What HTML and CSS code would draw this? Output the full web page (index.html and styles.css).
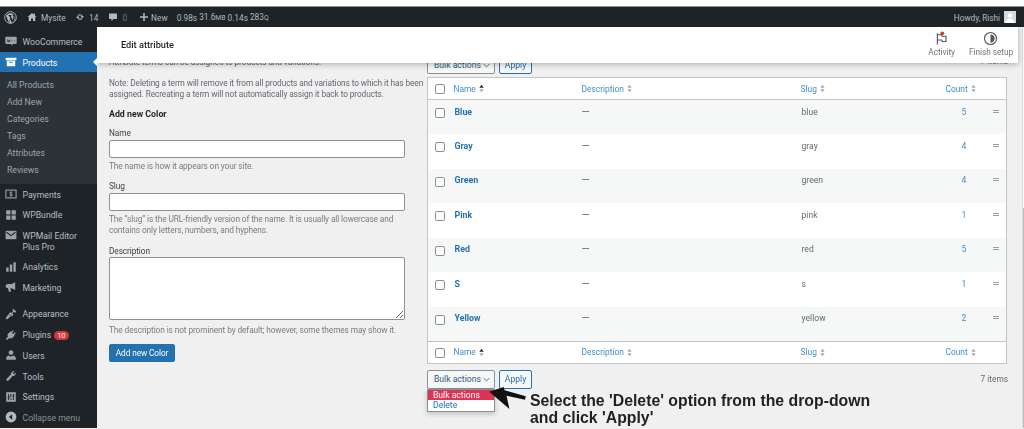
FILE: index.html
```html
<!DOCTYPE html>
<html lang="en">
<head>
<meta charset="utf-8">
<title>Edit attribute</title>
<link rel="stylesheet" href="styles.css">
</head>
<body>
<svg class="defs" width="0" height="0" aria-hidden="true">
  <symbol id="sort" viewBox="0 0 6 10"><path d="M3 0.5 5.6 4.2H.4zM3 9.5 .4 5.8h5.2z"/></symbol>
  <symbol id="sort-up" viewBox="0 0 6 10"><path d="M3 0.5 5.6 4.2H.4z" fill="#1d2327"/><path d="M3 9.5 .4 5.8h5.2z"/></symbol>
</svg>
<div class="strip"></div>
<header class="adminbar">
  <svg class="ab-wp" viewBox="0 0 20 20"><circle cx="10" cy="10" r="9" fill="none" stroke="currentColor" stroke-width="1.4"/><path d="M3.2 7.2 7.4 18l2.2-6.4-1.6-4.4H6.8V6.300h5v.9h-1.300l2.500 7.200 1.500-4.800c.4-1.400-.1-2.400-1-3.200-.3-.3 0-.9.5-.9h1.300C13 2.600 6.500 2 3.200 7.200zM10 12.800l-2 5.900c1.300.4 2.800.4 4.200-.1zM16.500 7c.6 2.900-.1 6.400-2.800 10 3.300-2 4.900-5.800 2.800-10z" fill="currentColor"/></svg>
  <svg class="ab-ico home" viewBox="0 0 20 20"><path d="M10 2 1 10h2.500v8H8v-5h4v5h4.500v-8H19l-3-2.700V3h-2.500v2.100z" fill="currentColor"/></svg>
  <span class="ab-item site">Mysite</span>
  <svg class="ab-ico upd" viewBox="0 0 20 20"><path d="M10 4.500c2.600 0 4.800 1.800 5.400 4.200H18l-3.500 4-3.500-4h2.300c-.5-1.200-1.900-2.100-3.300-2.100-1.200 0-2.300.6-3 1.500L5.200 6.500C6.400 5.300 8.100 4.500 10 4.500zM5.500 7.300l3.500 4H6.700c.5 1.200 1.900 2.100 3.300 2.100 1.200 0 2.300-.6 3-1.500l1.800 1.600c-1.200 1.200-2.900 2-4.800 2-2.600 0-4.800-1.800-5.400-4.200H2z" fill="currentColor"/></svg>
  <span class="ab-item num">14</span>
  <svg class="ab-ico cmt" viewBox="0 0 20 20"><path d="M3 3h14c.6 0 1 .4 1 1v9c0 .6-.4 1-1 1h-6l-4 4v-4H3c-.6 0-1-.4-1-1V4c0-.6.4-1 1-1z" fill="currentColor"/></svg>
  <span class="ab-item zero">0</span>
  <svg class="ab-ico plus" viewBox="0 0 20 20"><path d="M8.500 2h3v6.500H18v3h-6.500V18h-3v-6.500H2v-3h6.500z" fill="currentColor"/></svg>
  <span class="ab-item new">New</span>
  <span class="ab-item stats">0.98s</span>
  <span class="ab-item stats">31.6<small>MB</small></span>
  <span class="ab-item stats">0.14s</span>
  <span class="ab-item stats">283<small>Q</small></span>
  <span class="ab-item ab-howdy">Howdy, Rishi</span>
  <svg class="ab-avatar" viewBox="0 0 12 12"><rect width="12" height="12" fill="#d8d8d8"/><circle cx="6" cy="4.500" r="2.300" fill="#fff"/><path d="M1.500 12c0-3 2-4.500 4.500-4.500s4.500 1.500 4.500 4.500z" fill="#fff"/></svg>
</header>
<div class="layout">
  <nav class="sidebar">
    <ul class="menu">
      <li class="item"><svg class="ico" viewBox="0 0 20 20"><path d="M2 3h16c.8 0 1.500.7 1.500 1.500v9c0 .8-.7 1.500-1.500 1.500h-6l1 3-4-3H2c-.8 0-1.500-.7-1.500-1.500v-9C.5 3.700 1.200 3 2 3z" fill="currentColor"/><path d="M4 7.500l1 4 1.300-2.500 1 2.500 1.200-4M11 9.500h1M15 9.500h1" stroke="#1d2327" stroke-width="1.200" fill="none"/></svg><span>WooCommerce</span></li>
      <li class="item current"><svg class="ico" viewBox="0 0 20 20"><path d="M1 3h18v4H1zM3 8h14v9H3z" fill="currentColor"/><path d="M7 10.500h6" stroke="#2271b1" stroke-width="1.500"/></svg><span>Products</span></li>
      <li class="subwrap">
        <ul class="submenu">
          <li>All Products</li>
          <li>Add New</li>
          <li>Categories</li>
          <li>Tags</li>
          <li>Attributes</li>
          <li>Reviews</li>
        </ul>
      </li>
      <li class="item"><svg class="ico" viewBox="0 0 20 20"><rect x="1.500" y="3.500" width="17" height="13" fill="none" stroke="currentColor" stroke-width="1.800"/><path d="M12.500 7H8.500v3h3v3H7.500M10 5.500v9" fill="none" stroke="currentColor" stroke-width="1.300"/></svg><span>Payments</span></li>
      <li class="item"><svg class="ico" viewBox="0 0 20 20"><path d="M2 2h7v7H2zM11 2h7v7h-7zM2 11h7v7H2zM11 11h7v7h-7z" fill="currentColor"/></svg><span>WPBundle</span></li>
      <li class="item two"><svg class="ico" viewBox="0 0 20 20"><path d="M1 3h18v14H1z" fill="currentColor"/><path d="M2.500 5.500 10 11l7.500-5.500" fill="none" stroke="#1d2327" stroke-width="1.800"/></svg><span>WPMail Editor Plus Pro</span></li>
      <li class="item"><svg class="ico" viewBox="0 0 20 20"><path d="M2 11h4v7H2zM8 6h4v12H8zM14 2h4v16h-4z" fill="currentColor"/></svg><span>Analytics</span></li>
      <li class="item group-end"><svg class="ico" viewBox="0 0 20 20"><path d="M17 2v13l-6-3H9l1 6H6.500L5 12c-2.500 0-4-1.300-4-3.500S2.500 5 5 5h6z" fill="currentColor"/></svg><span>Marketing</span></li>
      <li class="item"><svg class="ico" viewBox="0 0 20 20"><path d="M13 1l6 5-2 2-2.500-1.500L12 9l2 2-2 3-6-5 3-2 1.500 1.500L13 6zM6 10l4 3.500L3.500 19 1 17z" fill="currentColor"/></svg><span>Appearance</span></li>
      <li class="item"><svg class="ico" viewBox="0 0 20 20"><path d="M13 2l1.500 1.500-3 3 2 2 3-3L18 7l-3 3 1 1-3.500 3.500c-1.500 1.500-3.500 1.500-5 .5L4 18H2v-2l3-3.500c-1-1.500-1-3.500.5-5L9 4l1 1z" fill="currentColor"/></svg><span>Plugins</span><b class="badge">10</b></li>
      <li class="item"><svg class="ico" viewBox="0 0 20 20"><circle cx="10" cy="6" r="4" fill="currentColor"/><path d="M2 18v-3c0-2 3-3.500 4.500-4 1 1 2.200 1.500 3.500 1.500s2.500-.5 3.500-1.500c1.500.5 4.500 2 4.500 4v3z" fill="currentColor"/></svg><span>Users</span></li>
      <li class="item"><svg class="ico" viewBox="0 0 20 20"><path d="M18 5.500c0 2.800-2.500 5-5.200 4.500L6 17.500c-.8.900-2.300.9-3.100 0-.9-.8-.9-2.300 0-3.100L10 7.200C9.500 4.500 11.700 2 14.500 2c.6 0 1 .1 1.500.3L13 5l2 2 2.700-3c.2.500.3 1 .3 1.500z" fill="currentColor"/></svg><span>Tools</span></li>
      <li class="item"><svg class="ico" viewBox="0 0 20 20"><path d="M2 2h16v16H2z" fill="currentColor"/><path d="M6 5v10M4.500 11h3M10 5v4H7.500M14 5v10M12.500 8h3M10 12v3" stroke="#1d2327" stroke-width="1.500" fill="none"/></svg><span>Settings</span></li>
      <li class="item collapse"><svg class="ico" viewBox="0 0 20 20"><circle cx="10" cy="10" r="9" fill="currentColor"/><path d="M12 5.500v9L6.500 10z" fill="#1d2327"/></svg><span>Collapse menu</span></li>
    </ul>
  </nav>
  <main class="content">
    <div class="wc-header">
      <h1 class="wc-title">Edit attribute</h1>
      <div class="wc-actions">
        <div class="wc-action">
          <svg class="wc-ico" viewBox="0 0 20 20"><path d="M4.500 3v15" stroke="#50575e" stroke-width="1.500"/><path d="M4.500 5h5.500l.7 2H16v7h-5l-.7-2H4.500" fill="none" stroke="#50575e" stroke-width="1.500"/><circle cx="11" cy="3" r="2.500" fill="#d63638"/></svg>
          <span>Activity</span>
        </div>
        <div class="wc-action">
          <svg class="wc-ico" viewBox="0 0 20 20"><circle cx="10" cy="10" r="8" fill="none" stroke="#50575e" stroke-width="1.500"/><path d="M10 4.500a5.500 5.500 0 0 1 0 11z" fill="#50575e"/></svg>
          <span>Finish setup</span>
        </div>
      </div>
    </div>
    <div class="columns">
      <section class="col-form">
        <p class="intro">Attribute terms can be assigned to products and variations.</p>
        <p class="note">Note: Deleting a term will remove it from all products and variations to which it has been assigned. Recreating a term will not automatically assign it back to products.</p>
        <h2 class="form-title">Add new Color</h2>
        <label class="lbl">Name</label>
        <input class="field" type="text">
        <p class="hint">The name is how it appears on your site.</p>
        <label class="lbl lbl-next">Slug</label>
        <input class="field" type="text">
        <p class="hint">The “slug” is the URL-friendly version of the name. It is usually all lowercase and contains only letters, numbers, and hyphens.</p>
        <label class="lbl lbl-desc">Description</label>
        <textarea class="area"></textarea>
        <p class="hint hint-area">The description is not prominent by default; however, some themes may show it.</p>
        <button class="primary" type="button">Add new Color</button>
      </section>
      <section class="col-table">
        <div class="nav nav-top">
          <div class="select">Bulk actions<svg class="chev" viewBox="0 0 10 6"><path d="M1 1l4 4 4-4" fill="none" stroke="#50575e" stroke-width="1.200"/></svg></div>
          <button class="apply" type="button">Apply</button>
          <span class="count">7 items</span>
        </div>
        <table class="terms">
          <colgroup><col class="c-check"><col class="c-name"><col class="c-desc"><col class="c-slug"><col class="c-count"><col class="c-handle"></colgroup>
          <thead>
            <tr>
              <th><span class="box"></span></th>
              <th>Name <svg class="sort"><use href="#sort-up"/></svg></th>
              <th>Description <svg class="sort"><use href="#sort"/></svg></th>
              <th>Slug <svg class="sort"><use href="#sort"/></svg></th>
              <th>Count <svg class="sort"><use href="#sort"/></svg></th>
              <th></th>
            </tr>
          </thead>
          <tbody>
            <tr class="alt"><td><span class="box"></span></td><td class="term">Blue</td><td class="dash">—</td><td class="slug">blue</td><td class="n">5</td><td><span class="grip"></span></td></tr>
            <tr><td><span class="box"></span></td><td class="term">Gray</td><td class="dash">—</td><td class="slug">gray</td><td class="n">4</td><td><span class="grip"></span></td></tr>
            <tr class="alt"><td><span class="box"></span></td><td class="term">Green</td><td class="dash">—</td><td class="slug">green</td><td class="n">4</td><td><span class="grip"></span></td></tr>
            <tr><td><span class="box"></span></td><td class="term">Pink</td><td class="dash">—</td><td class="slug">pink</td><td class="n">1</td><td><span class="grip"></span></td></tr>
            <tr class="alt"><td><span class="box"></span></td><td class="term">Red</td><td class="dash">—</td><td class="slug">red</td><td class="n">5</td><td><span class="grip"></span></td></tr>
            <tr><td><span class="box"></span></td><td class="term">S</td><td class="dash">—</td><td class="slug">s</td><td class="n">1</td><td><span class="grip"></span></td></tr>
            <tr class="alt"><td><span class="box"></span></td><td class="term">Yellow</td><td class="dash">—</td><td class="slug">yellow</td><td class="n">2</td><td><span class="grip"></span></td></tr>
          </tbody>
          <tfoot>
            <tr>
              <th><span class="box"></span></th>
              <th>Name <svg class="sort"><use href="#sort-up"/></svg></th>
              <th>Description <svg class="sort"><use href="#sort"/></svg></th>
              <th>Slug <svg class="sort"><use href="#sort"/></svg></th>
              <th>Count <svg class="sort"><use href="#sort"/></svg></th>
              <th></th>
            </tr>
          </tfoot>
        </table>
        <div class="nav nav-bottom">
          <div class="select">Bulk actions<svg class="chev" viewBox="0 0 10 6"><path d="M1 1l4 4 4-4" fill="none" stroke="#50575e" stroke-width="1.200"/></svg></div>
          <button class="apply" type="button">Apply</button>
          <span class="count">7 items</span>
          <ul class="dropdown">
            <li class="selected">Bulk actions</li>
            <li>Delete</li>
          </ul>
          <svg class="arrow" viewBox="0 0 40 26"><path d="M1 5 16 0l1 3.500 22 6-.8 3.700L19 9l3 14z" fill="#111"/></svg>
          <p class="callout">Select the 'Delete' option from the drop-down<br>and click 'Apply'</p>
        </div>
      </section>
    </div>
    <div class="scrollbar"></div>
  </main>
</div>
</body>
</html>
```

FILE: styles.css
```css
* { box-sizing: border-box; }
html, body { margin: 0; height: 429px; overflow: hidden; }
body {
  background: #f0f0f0;
  font-family: Roboto, "Noto Sans", sans-serif;
  font-size: 8.300px;
  line-height: 11px;
  color: #646970;
  filter: blur(0.3px);
}
.defs { position: absolute; }
ul { list-style: none; margin: 0; padding: 0; }
p, h1, h2 { margin: 0; }

.strip { height: 7px; background: #fff; border-bottom: 1px solid #8c8f94; }

.adminbar {
  height: 20px;
  background: #1d2327;
  color: #b4b9be;
  display: flex;
  align-items: center;
  padding: 0 8px 0 4px;
  font-size: 8.300px;
}
.ab-item { margin-top: 2px; }
.ab-wp { width: 13px; height: 13px; margin-right: 10px; }
.ab-ico { width: 10px; height: 10px; flex: none; }
.site { margin-left: 4px; margin-right: 9.500px; }
.upd { margin-right: 4px; }
.num { margin-right: 10px; }
.cmt { margin-right: 4px; }
.zero { color: #70767b; margin-right: 12px; }
.new { margin-left: 2px; margin-right: 9px; }
.stats { margin-right: 2px; }
.stats small { font-size: 6.800px; }
.ab-howdy { margin-left: auto; margin-right: 4px; letter-spacing: -0.05px; }
.ab-avatar { width: 12px; height: 12px; }

.layout { display: flex; height: 401px; }

.sidebar { width: 97px; flex: none; background: #1d2327; color: #b9bec3; padding-top: 4px; font-size: 8.700px; }
.item {
  height: 20.700px;
  display: flex;
  align-items: center;
  padding-left: 4.500px;
  gap: 6px;
  position: relative;
}
.item span { margin-top: 2px; }
.ico { width: 12px; height: 12px; flex: none; color: #9ca2a7; }
.item.two { height: 31px; }
.item.two span { width: 66px; }
.item.two .ico { align-self: flex-start; margin-top: 4px; }
.item.group-end { margin-bottom: 6px; }
.current { background: #2271b1; color: #fff; }
.current .ico { color: #fff; }
.current::after {
  content: "";
  position: absolute;
  right: 0;
  top: 6px;
  border: 4px solid transparent;
  border-right-color: #fff;
  border-left-width: 0;
}
.subwrap { background: #2c3338; padding: 4px 0 5.500px; color: #9ea4a9; }
.submenu li { height: 17px; line-height: 19px; padding-left: 7px; }
.badge {
  background: #d63638;
  color: #fff;
  border-radius: 7px;
  font-weight: 400;
  font-size: 7.500px;
  line-height: 9px;
  padding: 0 3px;
  margin: 1px 0 0 -3px;
}
.collapse { color: #8c9196; }
.collapse .ico { color: #b4b9be; }

.content { flex: 1; position: relative; overflow: hidden; }
.wc-header {
  position: absolute;
  top: 0; left: 0; right: 6px;
  height: 36px;
  background: #fff;
  box-shadow: 0 1px 6px rgba(0,0,0,.3);
  display: flex;
  align-items: center;
  justify-content: space-between;
  padding: 0 5px 2px 24px;
  z-index: 2;
}
.wc-title { font-size: 9.200px; font-weight: 500; color: #1d2327; line-height: 11px; margin-top: 1px; }
.wc-actions { display: flex; gap: 14px; }
.wc-action { display: flex; flex-direction: column; align-items: center; gap: 1px; letter-spacing: -0.06px; color: #757575; line-height: 10px; }
.wc-ico { width: 15px; height: 15px; }

.columns { display: flex; padding: 29px 17px 0 12px; gap: 22px; }
.col-form { width: 296px; flex: none; letter-spacing: -0.1px; }
.col-table { flex: 1; font-size: 8.600px; }

.intro { margin-top: 1px; height: 11px; }
.note { margin-top: 9.500px; width: 316px; }
.form-title { font-size: 8.800px; font-weight: 700; color: #1d2327; margin-top: 8.500px; line-height: 12px; letter-spacing: 0; }
.lbl { display: block; margin-top: 8px; color: #3c434a; line-height: 11px; }
.lbl-next { margin-top: 9px; }
.lbl-desc { margin-top: 10px; }
.field, .area {
  display: block;
  width: 296px;
  background: #fff;
  border: 1px solid #8c8f94;
  border-radius: 2px;
  margin-top: 1px;
  padding: 0;
}
.field { height: 18px; }
.area { height: 63.500px; resize: both; margin-top: -0.500px; }
.hint { color: #787c82; margin-top: 3px; }
.hint-area { margin-top: 5px; }
.primary {
  display: block;
  margin-top: 7.500px;
  width: 66px;
  height: 18.500px;
  padding: 1px 0 0;
  background: #2271b1;
  border: 1px solid #2271b1;
  border-radius: 2px;
  color: #fff;
  font: inherit;
  letter-spacing: inherit;
}

.nav { display: flex; align-items: center; position: relative; height: 19px; }
.nav-top { margin-top: -1px; }
.select {
  width: 68px;
  height: 19px;
  background: #f6f7f7;
  border: 1px solid #8c8f94;
  border-radius: 2px;
  display: flex;
  align-items: center;
  justify-content: space-between;
  padding: 1px 4px 0 6px;
  color: #2c5a85;
}
.chev { width: 7px; height: 5px; }
.apply {
  margin-left: 4px;
  width: 33px;
  height: 19px;
  padding: 1px 0 0;
  background: #f6f7f7;
  border: 1px solid #2271b1;
  border-radius: 2px;
  color: #2271b1;
  font: inherit;
}
.count { margin-left: auto; font-size: 8.300px; margin-right: -1px; padding-top: 1px; }
.nav-top .count { padding: 0 0 7px; }
.nav-bottom { margin-top: 6px; }

.terms {
  width: 580px;
  margin-top: 3px;
  border-collapse: collapse;
  table-layout: fixed;
  background: #fff;
  border: 1px solid #c3c4c7;
}
.c-check { width: 26px; }
.c-name { width: 128px; }
.c-desc { width: 219px; }
.c-slug { width: 145px; }
.c-count { width: 42px; }
.terms th {
  height: 22px;
  padding: 1px 0 0;
  text-align: left;
  font-weight: 400;
  font-size: 8.400px;
  color: #3f8fce;
}
.terms thead th { border-bottom: 1px solid #c3c4c7; }
.terms tfoot th { border-top: 1px solid #c3c4c7; }
.terms td { height: 34.500px; padding: 6.500px 0 0; vertical-align: top; }
.terms th:first-child, .terms td:first-child { padding-left: 7px; }
.terms td:first-child { padding-top: 8px; }
.terms td.dash { padding-top: 5.500px; font-size: 10.500px; }
.alt { background: #f6f7f7; }
.term { font-weight: 700; font-size: 8.800px; color: #2271b1; padding-left: 1px !important; }
.slug { padding-left: 1px !important; }
.n { color: #4a8dc4; padding-left: 16px !important; }
.box {
  display: block;
  width: 10px;
  height: 10px;
  background: #fff;
  border: 1px solid #8c8f94;
  border-radius: 2px;
}
.sort { width: 5px; height: 9px; fill: #a7aaad; vertical-align: -1.500px; margin-left: 1px; }
.grip { display: block; width: 6px; height: 3px; margin: 3px 0 0 5px; border-top: 1px solid #9a9ea3; border-bottom: 1px solid #9a9ea3; }

.dropdown {
  position: absolute;
  top: 19px;
  left: 0;
  width: 68px;
  background: #fff;
  border: 1px solid #8c8f94;
  box-shadow: 0 2px 5px rgba(0,0,0,.2);
  line-height: 10.500px;
  color: #2271b1;
  z-index: 1;
}
.dropdown li { padding-left: 5px; }
.dropdown .selected { background: #dc3454; color: #fff; }
.arrow { position: absolute; top: 17px; left: 61px; width: 39px; height: 25px; z-index: 2; }
.callout {
  position: absolute;
  top: 22px;
  left: 103px;
  white-space: nowrap;
  font-family: "Liberation Sans", Arial, sans-serif;
  font-weight: 700;
  font-size: 15.800px;
  line-height: 17px;
  color: #222;
}

.scrollbar {
  position: absolute;
  right: 0;
  top: 0;
  bottom: 0;
  width: 2px;
  background: #fafafa;
  border-left: 1px solid #dcdcdc;
}
.scrollbar::after {
  content: "";
  position: absolute;
  top: 181px;
  bottom: 0;
  left: 0;
  right: 0;
  background: #bdbdbd;
}
```
